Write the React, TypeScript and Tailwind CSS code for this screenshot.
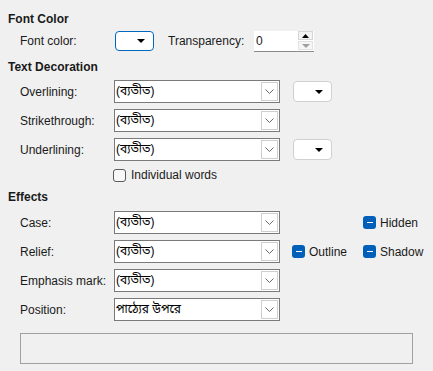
import React from "react";

const NONE = "(ব্যতীত)";

function Chevron() {
  return (
    <svg width="9" height="5" viewBox="0 0 9 5" fill="none">
      <polyline points="0.5,0.5 4.5,4.5 8.5,0.5" stroke="#6b6b6b" strokeWidth="1" />
    </svg>
  );
}

function Caret({ color = "#000" }: { color?: string }) {
  return (
    <svg width="8" height="4" viewBox="0 0 8 4">
      <polygon points="0,0 8,0 4,4" fill={color} />
    </svg>
  );
}

function Combo({ value }: { value: string }) {
  return (
    <div className="flex h-[23px] w-[166px] border border-[#7a7a7a] bg-white">
      <span className="flex-1 pl-px leading-[21px] text-black">{value}</span>
      <div className="my-px mr-px flex w-[17px] items-center justify-center border border-[#cfcfcf] bg-white">
        <Chevron />
      </div>
    </div>
  );
}

function ColorButton() {
  return (
    <div className="flex h-[21px] w-[39px] items-center justify-end rounded-[4px] border border-[#d0d0d0] bg-white pr-[8px]">
      <Caret />
    </div>
  );
}

function TriCheck({ label }: { label: string }) {
  return (
    <div className="flex items-center gap-[4px]">
      <div className="flex h-[13px] w-[13px] items-center justify-center rounded-[3px] bg-[#005fb8]">
        <div className="h-px w-[6px] bg-white" />
      </div>
      <span>{label}</span>
    </div>
  );
}

function Row({ label, children }: { label: string; children: React.ReactNode }) {
  return (
    <div className="flex h-[23px] items-center">
      <span className="w-[106px] shrink-0 whitespace-nowrap pl-[12px]">{label}</span>
      {children}
    </div>
  );
}

export default function App() {
  return (
    <div className="h-[371px] w-[433px] overflow-hidden bg-[#f0f0f0] pl-[8px] pt-[11px] font-['Liberation_Sans','Noto_Sans_Bengali','Noto_Sans',sans-serif] text-[12px] text-[#1a1a1a]">
      <div className="h-[16px] font-bold leading-[16px]">Font Color</div>

      <div className="mt-[3px] flex h-[22px] items-center">
        <span className="w-[107px] shrink-0 pl-[12px]">Font color:</span>
        <div className="flex h-[20px] w-[39px] items-center justify-end rounded-[4px] border border-[#0067c0] bg-white pr-[8px]">
          <Caret />
        </div>
        <span className="ml-[14px] w-[86px]">Transparency:</span>
        <div className="flex h-[21px] w-[60px] border-b border-[#8a8a8a] bg-white">
          <span className="flex-1 pl-[2px] leading-[20px]">0</span>
          <div className="mr-px flex w-[15px] flex-col justify-center gap-px">
            <div className="flex h-[9px] items-center justify-center border border-[#d6d6d6] bg-[#f3f3f3]">
              <svg width="7" height="4" viewBox="0 0 7 4">
                <polygon points="0,4 7,4 3.5,0" fill="#000" />
              </svg>
            </div>
            <div className="flex h-[9px] items-center justify-center border border-[#e2e2e2] bg-[#f6f6f6]">
              <Caret color="#a0a0a0" />
            </div>
          </div>
        </div>
      </div>

      <div className="mt-[7px] h-[16px] font-bold leading-[16px]">Text Decoration</div>

      <div className="mt-[5px] flex flex-col gap-[6px]">
        <Row label="Overlining:">
          <Combo value={NONE} />
          <div className="ml-[13px]">
            <ColorButton />
          </div>
        </Row>
        <Row label="Strikethrough:">
          <Combo value={NONE} />
        </Row>
        <Row label="Underlining:">
          <Combo value={NONE} />
          <div className="ml-[13px]">
            <ColorButton />
          </div>
        </Row>
      </div>

      <div className="mt-[6px] flex h-[16px] items-center gap-[5px] pl-[105px]">
        <div className="h-[13px] w-[13px] rounded-[3px] border border-[#5a5a5a] bg-[#f8f8f8]" />
        <span>Individual words</span>
      </div>

      <div className="mt-[6px] h-[16px] font-bold leading-[16px]">Effects</div>

      <div className="mt-[6px] flex flex-col gap-[6px]">
        <Row label="Case:">
          <Combo value={NONE} />
          <div className="ml-[83px]">
            <TriCheck label="Hidden" />
          </div>
        </Row>
        <Row label="Relief:">
          <Combo value={NONE} />
          <div className="ml-[12px] w-[71px]">
            <TriCheck label="Outline" />
          </div>
          <TriCheck label="Shadow" />
        </Row>
        <Row label="Emphasis mark:">
          <Combo value={NONE} />
        </Row>
        <Row label="Position:">
          <Combo value="পাঠ্যের উপরে" />
        </Row>
      </div>

      <div className="ml-[12px] mt-[12px] h-[31px] w-[393px] border border-[#a0a0a0]" />
    </div>
  );
}
